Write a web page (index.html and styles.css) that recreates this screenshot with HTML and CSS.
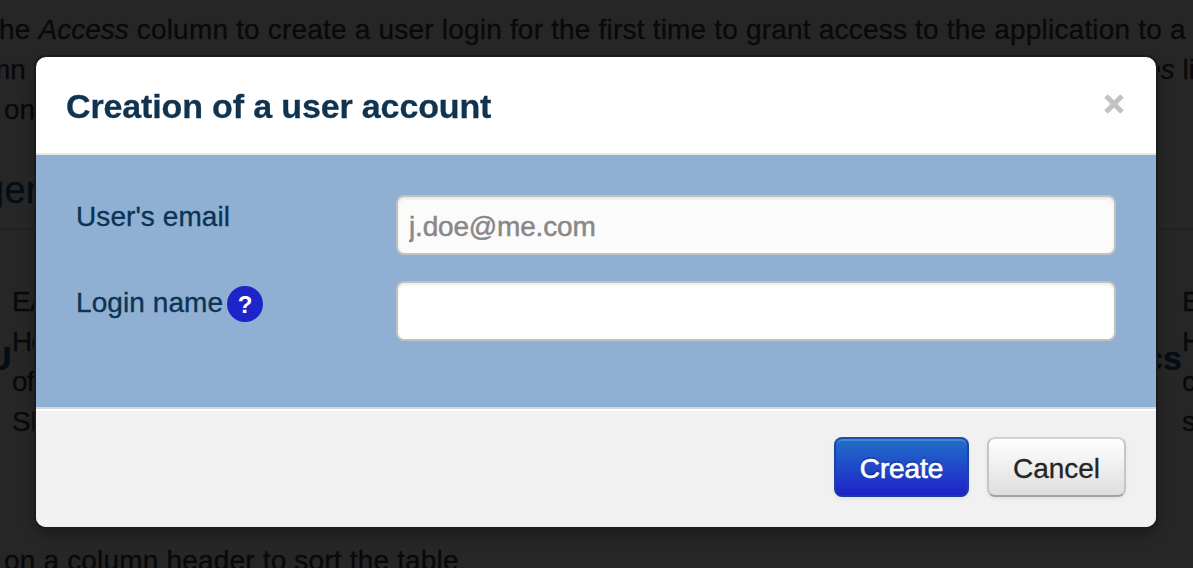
FILE: index.html
```html
<!DOCTYPE html>
<html lang="en">
<head>
<meta charset="utf-8">
<title>Creation of a user account</title>
<link rel="stylesheet" href="styles.css">
</head>
<body>
<main class="page">
  <div class="intro">
    <p class="intro-line lead">he <em>Access</em> column to create a user login for the first time to grant access to the application to a</p>
    <p class="intro-line split"><span class="cut-left">mn f</span><span class="cut-right"><em>es</em> li</span></p>
    <p class="intro-line third">on</p>
  </div>
  <h2 class="section-title">ger</h2>
  <div class="table">
    <div class="name name-left">U</div>
    <div class="cell tight">EA<br>Ho<br>of<br>SI</div>
    <div class="name name-right">cs</div>
    <div class="cell">E<br>H<br>c<br>s</div>
  </div>
  <p class="hint">on a column header to sort the table</p>
</main>
<div class="backdrop">
  <form class="modal">
    <header class="modal-header">
      <h1 class="title">Creation of a user account</h1>
      <button class="close" type="button" aria-label="Close"><svg class="close-icon" viewBox="0 0 20 20"><path d="M2 2 18 18M18 2 2 18"/></svg></button>
    </header>
    <div class="modal-body">
      <div class="field">
        <label class="label" for="email">User's email</label>
        <input class="input muted" id="email" type="text" placeholder="j.doe@me.com">
      </div>
      <div class="field">
        <label class="label" for="login"><span>Login name</span><span class="help">?</span></label>
        <input class="input" id="login" type="text">
      </div>
    </div>
    <footer class="modal-footer">
      <button class="btn primary" type="button">Create</button>
      <button class="btn secondary" type="button">Cancel</button>
    </footer>
  </form>
</div>
</body>
</html>
```

FILE: styles.css
```css
* { box-sizing: border-box; }
body {
  margin: 0;
  height: 568px;
  overflow: hidden;
  background: #262626;
  font-family: "Liberation Sans", Arial, sans-serif;
  font-size: 28px;
  line-height: 40px;
  color: #090909;
}
p, h1, h2 { margin: 0; }
.page { width: 1193px; height: 568px; overflow: hidden; white-space: nowrap; -webkit-text-stroke: .3px; }
.intro { padding-top: 10px; }
.intro-line { height: 40px; }
.lead { margin-left: -1px; letter-spacing: .195px; }
.lead em { letter-spacing: 0; }
.split { display: flex; justify-content: space-between; }
.cut-left { margin-left: -13px; }
.cut-right { margin-right: -2px; }
.third { padding-left: 4px; }
.section-title {
  height: 100px;
  padding-top: 40px;
  margin-left: -17px;
  border-bottom: 2px solid #202020;
  font-size: 38px;
  font-weight: 400;
  letter-spacing: .3px;
  color: #020d15;
}
.table {
  display: grid;
  grid-template-columns: 13px 1137px 33px 1fr;
  height: 220px;
  padding-top: 52px;
}
.cell { margin-left: -1px; }
.tight { letter-spacing: -.8px; }
.name { padding-top: 56px; font-size: 34px; font-weight: 700; color: #020d15; }
.name-left { margin-left: -13px; }
.name-right { margin-left: -6px; }
.hint { padding: 91px 0 0 4px; letter-spacing: .18px; }

.backdrop {
  position: fixed;
  inset: 0;
  padding: 57px 37px 41px 36px;
}
.modal {
  display: flex;
  flex-direction: column;
  height: 470px;
  overflow: hidden;
  border-radius: 10px;
  background: #fff;
  box-shadow: 0 0 0 2px #1b1b1b, 0 6px 14px rgba(0, 0, 0, .3);
}
.modal-header {
  display: flex;
  justify-content: space-between;
  height: 98px;
  padding: 30px 30px 0;
  border-bottom: 2px solid #e9e9e9;
}
.title { font-size: 34px; line-height: 38px; letter-spacing: -.14px; color: #10334f; -webkit-text-stroke: .3px; }
.close { width: 24px; height: 36px; padding: 0; border: 0; background: none; }
.close-icon { display: block; width: 20px; height: 20px; margin: -3px 0 0 2px; fill: none; stroke: #c2c2c2; stroke-width: 5; }
.modal-body {
  display: flex;
  flex-direction: column;
  gap: 26px;
  height: 252px;
  padding: 40px;
  background: #90b0d3;
}
.field { display: flex; }
.label { display: flex; align-items: flex-start; gap: 4px; width: 320px; padding-top: 2px; color: #0b3453; letter-spacing: .08px; -webkit-text-stroke: .35px; }
.help {
  width: 36px;
  height: 36px;
  margin-top: 3px;
  border-radius: 50%;
  background: #1d25c9;
  color: #fff;
  font-size: 24px;
  font-weight: 700;
  line-height: 37px;
  text-align: center;
  -webkit-text-stroke: 0;
}
.input {
  width: 720px;
  height: 60px;
  padding: 4px 11px 0;
  border: 2px solid #c1c1c1;
  border-radius: 8px;
  background: #fff;
  box-shadow: inset 0 2px 3px rgba(0, 0, 0, .08);
  font: 28px "Liberation Sans", Arial, sans-serif;
  letter-spacing: -.18px;
}
.muted { background: #fbfbfb; }
.input::placeholder { color: #888; opacity: 1; -webkit-text-stroke: .5px; }
.modal-footer {
  display: flex;
  justify-content: flex-end;
  gap: 18px;
  height: 120px;
  padding: 28px 30px 0;
  border-top: 2px solid #d6d8da;
  background: #f1f1f1;
  box-shadow: inset 0 2px #fff;
}
.btn {
  height: 60px;
  padding: 4px 0 0;
  border: 2px solid;
  border-radius: 8px;
  font: 28px "Liberation Sans", Arial, sans-serif;
}
.primary {
  width: 135px;
  border-color: #1c4dac #1b43a4 #1c3b9a;
  background: linear-gradient(#216fc9, #1e22c9);
  box-shadow: inset 0 2px rgba(255, 255, 255, .16), 0 2px 4px rgba(0, 0, 0, .06);
  color: #fff;
  text-shadow: 0 -2px rgba(0, 0, 0, .25);
  letter-spacing: -.1px;
  -webkit-text-stroke: .6px #fff;
}
.secondary {
  width: 139px;
  border-color: #d2d2d2 #c5c5c5 #a3a3a3;
  background: linear-gradient(#fff, #dedede);
  box-shadow: 0 2px 4px rgba(0, 0, 0, .06);
  color: #252525;
  -webkit-text-stroke: .3px;
}
```
